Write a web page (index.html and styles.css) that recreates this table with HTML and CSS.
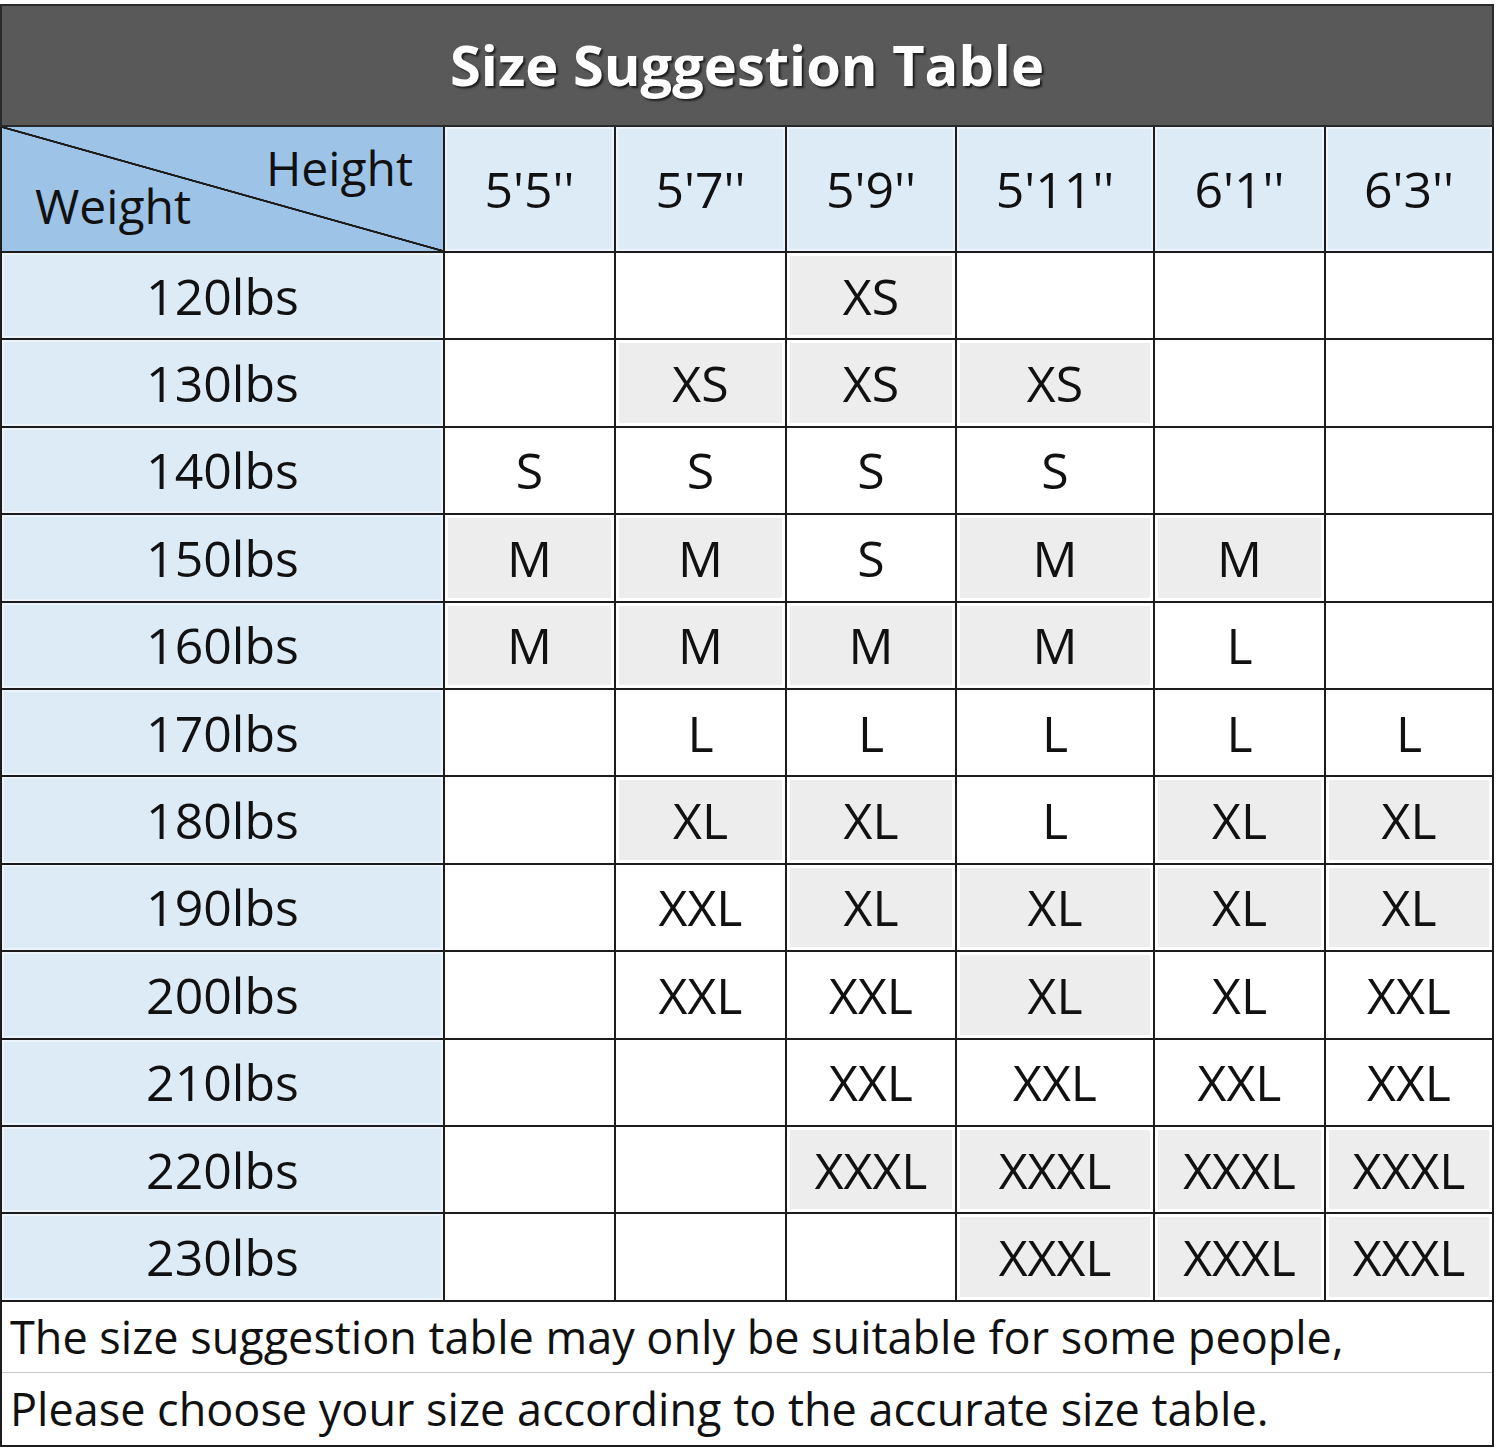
FILE: index.html
```html
<!DOCTYPE html>
<html lang="en">
<head>
<meta charset="utf-8">
<title>Size Suggestion Table</title>
<link rel="stylesheet" href="styles.css">
</head>
<body>
<div class="page">
<table class="size-table">
  <colgroup>
    <col class="c-weight">
    <col class="c-a"><col class="c-a"><col class="c-b"><col class="c-wide"><col class="c-a"><col class="c-c">
  </colgroup>
  <thead>
    <tr class="title-row"><th colspan="7" class="title">Size Suggestion Table</th></tr>
    <tr class="head-row">
      <th class="corner">
        <div class="corner-inner">
          <span class="h-label">Height</span>
          <span class="w-label">Weight</span>
        </div>
      </th>
      <th class="hcell">5'5''</th>
      <th class="hcell">5'7''</th>
      <th class="hcell">5'9''</th>
      <th class="hcell">5'11''</th>
      <th class="hcell">6'1''</th>
      <th class="hcell">6'3''</th>
    </tr>
  </thead>
  <tbody>
    <tr><th class="wcell">120lbs</th><td></td><td></td><td class="g">XS</td><td></td><td></td><td></td></tr>
    <tr><th class="wcell">130lbs</th><td></td><td class="g">XS</td><td class="g">XS</td><td class="g">XS</td><td></td><td></td></tr>
    <tr><th class="wcell">140lbs</th><td>S</td><td>S</td><td>S</td><td>S</td><td></td><td></td></tr>
    <tr><th class="wcell">150lbs</th><td class="g">M</td><td class="g">M</td><td>S</td><td class="g">M</td><td class="g">M</td><td></td></tr>
    <tr><th class="wcell">160lbs</th><td class="g">M</td><td class="g">M</td><td class="g">M</td><td class="g">M</td><td>L</td><td></td></tr>
    <tr><th class="wcell">170lbs</th><td></td><td>L</td><td>L</td><td>L</td><td>L</td><td>L</td></tr>
    <tr><th class="wcell">180lbs</th><td></td><td class="g">XL</td><td class="g">XL</td><td>L</td><td class="g">XL</td><td class="g">XL</td></tr>
    <tr><th class="wcell">190lbs</th><td></td><td>XXL</td><td class="g">XL</td><td class="g">XL</td><td class="g">XL</td><td class="g">XL</td></tr>
    <tr><th class="wcell">200lbs</th><td></td><td>XXL</td><td>XXL</td><td class="g">XL</td><td>XL</td><td>XXL</td></tr>
    <tr><th class="wcell">210lbs</th><td></td><td></td><td>XXL</td><td>XXL</td><td>XXL</td><td>XXL</td></tr>
    <tr><th class="wcell">220lbs</th><td></td><td></td><td class="g">XXXL</td><td class="g">XXXL</td><td class="g">XXXL</td><td class="g">XXXL</td></tr>
    <tr><th class="wcell">230lbs</th><td></td><td></td><td></td><td class="g">XXXL</td><td class="g">XXXL</td><td class="g">XXXL</td></tr>
  </tbody>
  <tfoot>
    <tr class="note note-1"><td colspan="7">The size suggestion table may only be suitable for some people,</td></tr>
    <tr class="note note-2"><td colspan="7">Please choose your size according to the accurate size table.</td></tr>
  </tfoot>
</table>
</div>
</body>
</html>
```

FILE: styles.css
```css
html, body {
  margin: 0;
  padding: 0;
  background: #ffffff;
}

.page {
  padding-top: 4px;
  font-family: "Open Sans", "Noto Sans", "DejaVu Sans", sans-serif;
  color: #111111;
}

.size-table {
  border-collapse: collapse;
  table-layout: fixed;
  width: 1493px;
  border: 2px solid #1c1c1c;
}

.c-weight { width: 443px; }
.c-a { width: 171px; }
.c-b { width: 170px; }
.c-wide { width: 198px; }
.c-c { width: 168px; }

.size-table th,
.size-table td {
  border: 2px solid #1c1c1c;
  padding: 0;
  text-align: center;
  vertical-align: middle;
  font-weight: 400;
  font-size: 50px;
  line-height: 1;
  color: #111111;
}

.title-row .title {
  height: 115px;
  padding-bottom: 4px;
  background: #595959;
  color: #ffffff;
  font-weight: 700;
  font-size: 56px;
  text-shadow: 2px 2px 2px #1e1e1e;
  border-color: #2a2a2a;
}

.head-row th {
  height: 124px;
}

.corner {
  background-color: #9dc3e6;
  background-image: linear-gradient(to top right,
      rgba(0,0,0,0) calc(50% - 1.3px),
      #1c1c1c calc(50% - 0.8px),
      #1c1c1c calc(50% + 0.8px),
      rgba(0,0,0,0) calc(50% + 1.3px));
  vertical-align: top !important;
}

.corner-inner {
  display: flex;
  flex-direction: column;
  padding-top: 17px;
}

.h-label {
  align-self: flex-end;
  margin-right: 30px;
  font-size: 48px;
  line-height: 48px;
}

.w-label {
  align-self: flex-start;
  margin-left: 33px;
  margin-top: -10px;
  font-size: 48px;
  line-height: 48px;
}

.hcell {
  background: #ddebf7;
  box-shadow: inset 0 0 0 2px #ecf3fa;
}

.wcell {
  background: #ddebf7;
  box-shadow: inset 0 0 0 2px #ecf3fa;
}

tbody tr {
  height: 87.4px;
}

tbody td.g {
  background: #ededed;
  box-shadow: inset 0 0 0 3px #ffffff;
}

.note td {
  text-align: left;
  font-size: 45px;
  padding-left: 8px;
  white-space: nowrap;
}

.note-1 td {
  height: 70px;
  border-bottom: 1px solid #c9c9c9;
}

.note-2 td {
  height: 72px;
  border-top: 1px solid #c9c9c9;
}
```
